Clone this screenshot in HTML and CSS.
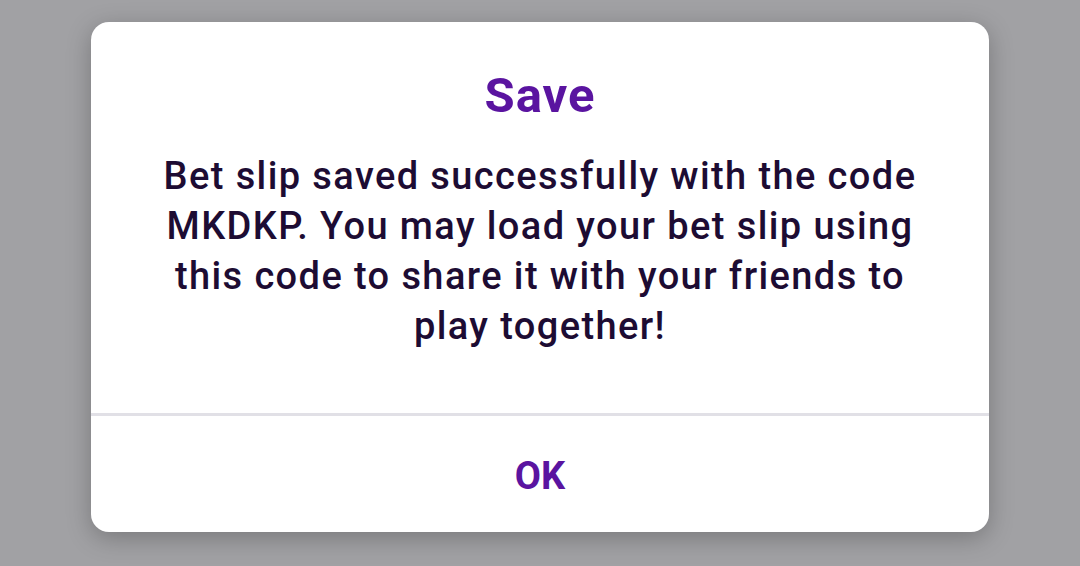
FILE: index.html
```html
<!DOCTYPE html>
<html lang="en">
<head>
    <meta charset="UTF-8">
    <meta name="viewport" content="width=device-width, initial-scale=1.0">
    <title>Save</title>
    <link rel="stylesheet" href="styles.css">
</head>
<body>
    <div class="dialog">
        <div class="dialog-content">
            <h1 class="dialog-title">Save</h1>
            <p class="dialog-message">Bet slip saved successfully with the code MKDKP. You may load your bet slip using this code to share it with your friends to play together!</p>
        </div>
        <div class="dialog-actions">
            <button class="dialog-button">OK</button>
        </div>
    </div>
</body>
</html>
```

FILE: styles.css
```css
html, body {
    margin: 0;
    height: 100%;
}

body {
    background-color: #a1a1a4;
    font-family: Roboto, "Noto Sans", sans-serif;
    display: flex;
    justify-content: center;
    align-items: flex-start;
    padding-top: 22px;
    box-sizing: border-box;
}

.dialog {
    width: 898px;
    height: 510px;
    background-color: #fff;
    border-radius: 18px;
    box-shadow: 0 6px 24px rgba(0, 0, 0, 0.25);
    display: flex;
    flex-direction: column;
    overflow: hidden;
}

.dialog-content {
    flex: 1;
    padding: 46px 50px 0;
    text-align: center;
}

.dialog-title {
    margin: 0;
    font-size: 49px;
    line-height: 56px;
    font-weight: 700;
    color: #5a14a0;
    letter-spacing: 1px;
}

.dialog-message {
    margin: 27px 0 0;
    font-size: 38px;
    line-height: 50px;
    font-weight: 500;
    color: #1d0c33;
    letter-spacing: 1.4px;
}

.dialog-actions {
    border-top: 3px solid #e1e0e6;
    height: 119px;
    box-sizing: border-box;
    padding-top: 3px;
    display: flex;
    align-items: center;
    justify-content: center;
}

.dialog-button {
    background: none;
    border: none;
    font-family: inherit;
    font-size: 38px;
    font-weight: 700;
    color: #5a14a0;
    padding: 0 20px;
    cursor: pointer;
}
```
